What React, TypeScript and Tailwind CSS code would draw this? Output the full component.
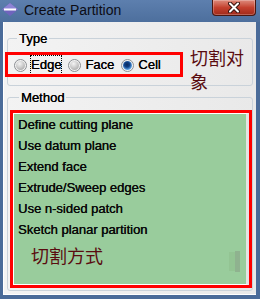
import React from "react";

const ui = { fontFamily: '"Liberation Sans", Arial, sans-serif' };
const cjk = { fontFamily: '"Noto Sans CJK SC", "Liberation Sans", sans-serif' };

const methods = [
  "Define cutting plane",
  "Use datum plane",
  "Extend face",
  "Extrude/Sweep edges",
  "Use n-sided patch",
  "Sketch planar partition",
];

function AppIcon() {
  return (
    <svg width="16" height="13" viewBox="0 0 16 13">
      <polygon points="8,0 16,6.5 8,13 0,6.5" fill="#6f64bd" />
      <polygon points="8,0 16,6.5 0,6.5" fill="#8d83d4" />
      <rect x="2" y="5.5" width="12" height="2" fill="#ffffff" />
    </svg>
  );
}

function CloseButton() {
  return (
    <div className="flex h-[16px] w-[44px] items-center justify-center rounded-b-[4px] border border-t-0 border-[#4a1710] bg-gradient-to-b from-[#dd8a7c] via-[#c4402e] to-[#a02a1a] shadow-[inset_0_0_0_1px_rgba(255,255,255,0.25)]">
      <svg width="12" height="11" viewBox="0 0 12 11">
        <path d="M2 1.5 L10 9.5 M10 1.5 L2 9.5" stroke="#3a1410" strokeWidth="4" strokeLinecap="round" />
        <path d="M2 1.5 L10 9.5 M10 1.5 L2 9.5" stroke="#ffffff" strokeWidth="2" strokeLinecap="round" />
      </svg>
    </div>
  );
}

function Radio({ label, checked, focused }: { label: string; checked?: boolean; focused?: boolean }) {
  return (
    <div className="flex items-center">
      <div className="flex h-[13px] w-[13px] items-center justify-center rounded-full border border-[#8c8f93] bg-[#f2f2f2]">
        {checked ? (
          <div className="h-[9px] w-[9px] rounded-full bg-[radial-gradient(circle_at_45%_40%,#0a2a5c_0%,#0e3f86_35%,#5fa5e6_70%,#c9e3fb_100%)]" />
        ) : (
          <div className="h-[9px] w-[9px] rounded-full bg-[radial-gradient(circle_at_40%_30%,#f4f4f4_0%,#c4c4c4_55%,#9a9a9a_100%)]" />
        )}
      </div>
      <span
        className={
          "ml-[3px] border text-[13px] leading-[18px] text-black [text-shadow:0.3px_0_0_#000] " +
          (focused ? "border-dotted border-black" : "border-transparent")
        }
      >
        {label}
      </span>
    </div>
  );
}

export default function App() {
  return (
    <div className="relative h-[299px] w-[260px] overflow-hidden bg-[#4a6b99]" style={ui}>
      {/* title bar */}
      <div className="flex h-[22px] items-start bg-gradient-to-b from-[#5d7fae] to-[#4d6f9d]">
        <div className="ml-[2px] mt-[3px]">
          <AppIcon />
        </div>
        <span className="ml-[6px] mt-[2px] text-[14px] leading-[16px] text-[#0c0c14]">Create Partition</span>
        <div className="ml-auto mr-[4px]">
          <CloseButton />
        </div>
      </div>

      {/* client area */}
      <div className="relative ml-[3px] mr-[4px] h-[273px] border-b border-l border-white bg-gradient-to-r from-[#f3f3f3] to-[#e9e9e9] pt-[9px]">
        <fieldset className="ml-[3px] mr-[3px] rounded-[3px] border border-[#c9d2da] pb-[10px]">
          <legend className="ml-[9px] px-[2px] text-[13px] leading-[15px] text-black [text-shadow:0.3px_0_0_#000]">Type</legend>
          <div className="mt-[9px] flex h-[20px] items-center gap-[6px] pl-[6px]">
            <Radio label="Edge" focused />
            <Radio label="Face" />
            <Radio label="Cell" checked />
          </div>
        </fieldset>

        <fieldset className="ml-[3px] mr-[3px] mt-[4px] rounded-[3px] border border-[#c9d2da] pb-[2px] pl-[2px]">
          <legend className="ml-[9px] px-[2px] text-[13px] leading-[15px] text-black [text-shadow:0.3px_0_0_#000]">Method</legend>
          <div className="mt-[5px] w-[242px] border-[3px] border-[#ff0000]">
            <div className="relative h-[172px] border border-r-[3px] border-white border-r-[#e4e4e4] bg-[#99cc9c]">
              <ul className="pl-[4px]">
                {methods.map((m) => (
                  <li key={m} className="h-[21px] text-[13px] leading-[21px] text-[#0a0a0a] [text-shadow:0.3px_0_0_#000]">
                    {m}
                  </li>
                ))}
              </ul>
              <div className="ml-[17px] mt-[3px] text-[18px] leading-[24px] text-[#5a0c10]" style={cjk}>
                切割方式
              </div>
              <div className="absolute right-[6px] top-[137px] h-[21px] w-[5px] bg-[#8fb28f]" />
              <div className="absolute right-[11px] top-[138px] h-[19px] w-[6px] bg-[#93c493]" />
            </div>
          </div>
        </fieldset>

        {/* annotation overlays */}
        <div className="absolute left-[1px] top-[30px] h-[25px] w-[178px] border-[3px] border-[#ff0000]" />
        <div className="absolute left-[186px] top-[23px] w-[60px] text-[18px] leading-[24px] text-[#5a0c10]" style={cjk}>
          切割对象
        </div>
      </div>
    </div>
  );
}
